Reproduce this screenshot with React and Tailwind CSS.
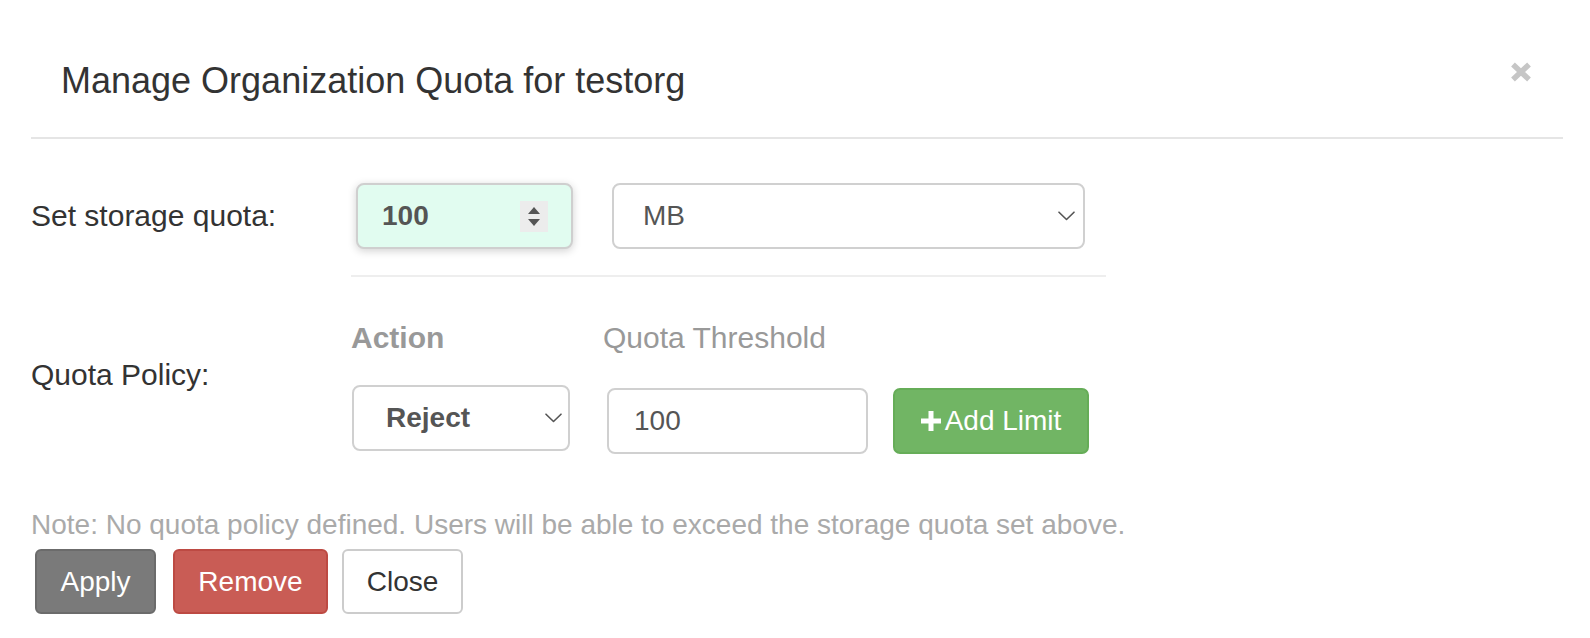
import React from "react";

function Chevron({ className }) {
  return (
    <svg className={className} width="17" height="10" viewBox="0 0 17 10" fill="none">
      <path d="M1 1.2 L8.5 8.5 L16 1.2" stroke="#555" strokeWidth="1.6" strokeLinecap="round" strokeLinejoin="round" />
    </svg>
  );
}

export default function App() {
  return (
    <div className="w-[1590px] h-[638px] bg-white overflow-hidden text-[#333] font-['Liberation_Sans',Arial,Helvetica,sans-serif]">
      {/* Header */}
      <div className="ml-[31px] mr-[27px] border-b-2 border-[#e5e5e5] pt-[61px] pb-[36px] pl-[30px] pr-[31px] flex justify-between items-start">
        <h4 className="text-[36px] leading-[40px] font-normal text-[#333]">Manage Organization Quota for testorg</h4>
        <svg className="mt-[1px]" width="22" height="20" viewBox="0 0 22 20">
          <path d="M3 2.5 L19 17.5 M19 2.5 L3 17.5" stroke="#c6c6c6" strokeWidth="5.5" strokeLinecap="butt" />
        </svg>
      </div>

      {/* Body */}
      <div className="pl-[31px]">
        {/* Row 1 */}
        <div className="mt-[44px] flex items-center">
          <div className="w-[320px] text-[30px] leading-[36px] text-[#333]">Set storage quota:</div>
          <div className="ml-[5px] w-[217px] h-[66px] rounded-[8px] border-2 border-[#cfcfcf] bg-[#e1fcf0] shadow-[0_2px_9px_rgba(0,0,0,0.18)] flex items-center justify-between pl-[24px] pr-[23px]">
            <span className="text-[28px] font-bold text-[#555]">100</span>
            <div className="w-[28px] h-[31px] bg-[#ececec] flex flex-col items-center justify-center gap-[5px]">
              <svg width="12" height="7" viewBox="0 0 12 7"><path d="M6 0 L12 7 L0 7 Z" fill="#555" /></svg>
              <svg width="12" height="7" viewBox="0 0 12 7"><path d="M0 0 L12 0 L6 7 Z" fill="#555" /></svg>
            </div>
          </div>
          <div className="ml-[39px] w-[473px] h-[66px] rounded-[8px] border-2 border-[#d0d0d0] bg-white flex items-center justify-between pl-[29px] pr-[8px]">
            <span className="text-[28px] text-[#555]">MB</span>
            <Chevron />
          </div>
        </div>

        {/* Divider */}
        <div className="mt-[26px] ml-[320px] w-[755px] h-[2px] bg-[#eeeeee]" />

        {/* Row 2 */}
        <div className="mt-[43px] flex items-start">
          <div className="w-[320px] pt-[37px] text-[30px] leading-[36px] text-[#333]">Quota Policy:</div>
          <div className="flex flex-col">
            <div className="flex text-[30px] leading-[36px] text-[#999]">
              <div className="w-[252px] font-bold">Action</div>
              <div>Quota Threshold</div>
            </div>
            <div className="mt-[29px] flex items-start">
              <div className="ml-[1px] w-[218px] h-[66px] rounded-[8px] border-2 border-[#d0d0d0] bg-white flex items-center justify-between pl-[32px] pr-[6px]">
                <span className="text-[28px] font-bold text-[#555]">Reject</span>
                <Chevron />
              </div>
              <div className="mt-[3px] ml-[37px] w-[261px] h-[66px] rounded-[8px] border-2 border-[#d0d0d0] bg-white flex items-center pl-[25px]">
                <span className="text-[28px] text-[#555]">100</span>
              </div>
              <button className="mt-[3px] ml-[25px] w-[196px] h-[66px] rounded-[7px] border-2 border-[#66ad58] bg-[#71b564] flex items-center justify-center gap-[4px] text-white text-[28px]">
                <svg width="20" height="20" viewBox="0 0 20 20"><path d="M7.5 0 H12.5 V7.5 H20 V12.5 H12.5 V20 H7.5 V12.5 H0 V7.5 H7.5 Z" fill="#fff" /></svg>
                <span>Add Limit</span>
              </button>
            </div>
          </div>
        </div>

        {/* Note */}
        <div className="mt-[55px] text-[28px] leading-[32px] text-[#aaaaaa]">
          Note: No quota policy defined. Users will be able to exceed the storage quota set above.
        </div>

        {/* Buttons */}
        <div className="mt-[8px] flex">
          <button className="ml-[4px] w-[121px] h-[65px] rounded-[6px] border-2 border-[#6b6b6b] bg-[#7a7a7a] text-white text-[28px]">Apply</button>
          <button className="ml-[17px] w-[155px] h-[65px] rounded-[6px] border-2 border-[#bd4a43] bg-[#c95c55] text-white text-[28px]">Remove</button>
          <button className="ml-[14px] w-[121px] h-[65px] rounded-[6px] border-2 border-[#cccccc] bg-white text-[#333] text-[28px]">Close</button>
        </div>
      </div>
    </div>
  );
}
